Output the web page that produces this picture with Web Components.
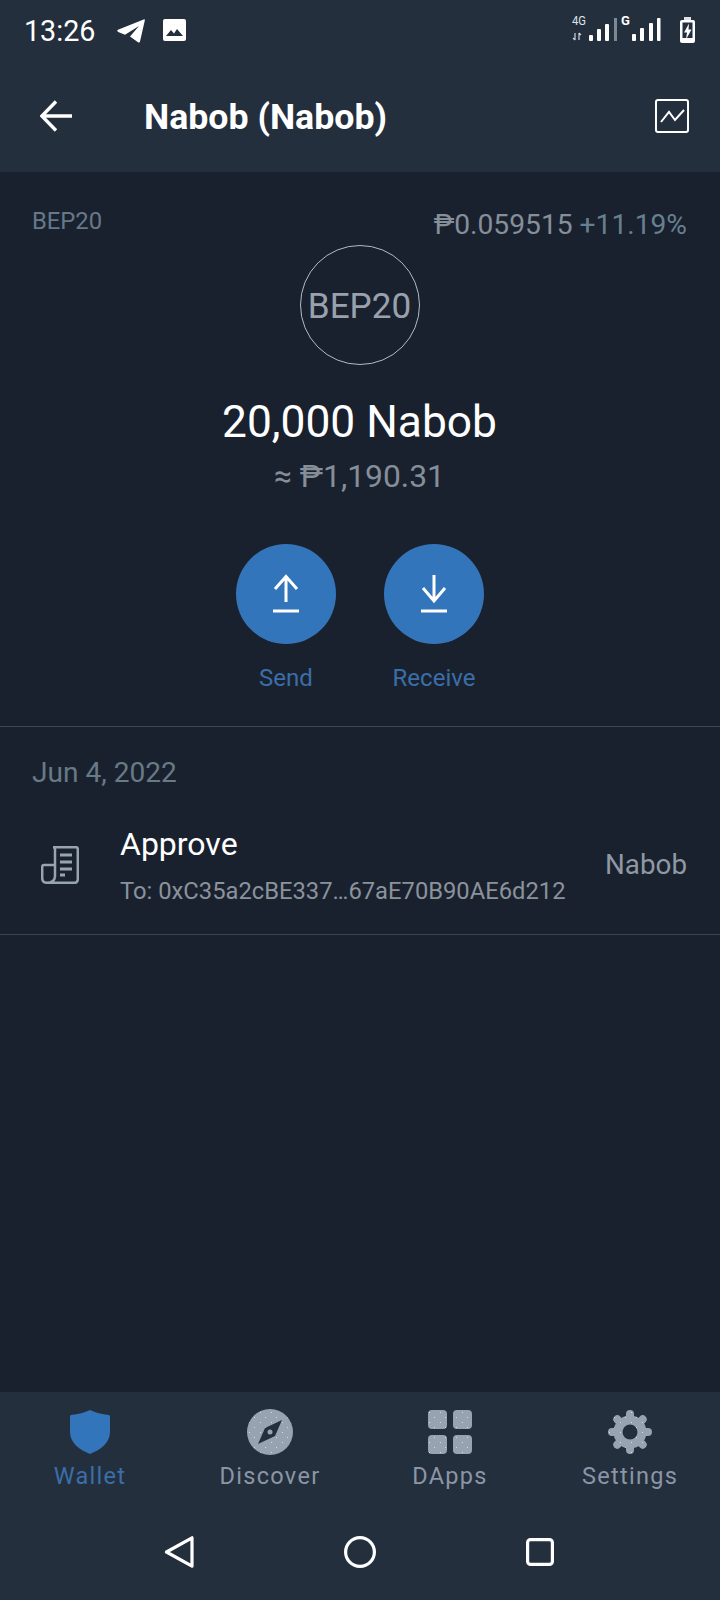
<!DOCTYPE html>
<html lang="en"><head><meta charset="utf-8"><title>Nabob</title>
<style>
html,body{margin:0;padding:0;background:#1a212e}
body{width:720px;height:1600px;display:flex;flex-direction:column;font-family:Roboto,"Liberation Sans",sans-serif;overflow:hidden}
token-page{flex:1}
</style></head><body>
<status-bar></status-bar>
<app-bar>Nabob (Nabob)</app-bar>
<token-page>
  <token-summary></token-summary>
  <tx-group date="Jun 4, 2022">
    <tx-row title="Approve" sub="To: 0xC35a2cBE337…67aE70B90AE6d212" value="Nabob"></tx-row>
  </tx-group>
</token-page>
<tab-bar></tab-bar>
<nav-bar></nav-bar>
<script>
const dots=`<defs><pattern id="d" width="11" height="10" patternUnits="userSpaceOnUse"><rect width="11" height="10" fill="#98a3b1"/><rect x="2" y="3" width="1" height="1" fill="#d5dae0"/><rect x="7" y="8" width="1" height="1" fill="#d5dae0"/></pattern></defs>`;
function el(name,html){customElements.define(name,class extends HTMLElement{
  connectedCallback(){ if(this.shadowRoot)return; this.attachShadow({mode:'open'}).innerHTML=typeof html==='function'?html(this):html; }
});}
el('status-bar',`<style>
:host{display:flex;align-items:center;height:62px;background:#242f3e;color:#fff;padding:0 20px 0 24px}
.t{font-size:28.700px;line-height:32px;width:70px;font-weight:400}
svg{display:block}
.r{margin-left:auto}
</style>
<div class="t">13:26</div>
<svg style="margin-left:23px" width="28" height="24" viewBox="0 0 28 24"><path fill="#fff" d="M1 10.8 26.6.4Q28-.1 27.8 1.4L23 22.6Q22.6 24 21 23.2L13 17.6 22 7 8 15.800 1.200 13Q-.6 11.800 1 10.800Z"/></svg>
<svg style="margin-left:18px;margin-top:-2px" width="23" height="22" viewBox="0 0 23 22"><rect width="23" height="22" rx="2" fill="#fff"/><path fill="#242f3e" d="M3 17 8 11l3 3.500 3-4.500 6 7Z"/></svg>
<svg class="r" width="130" height="62" viewBox="570 0 130 62" fill="#fff">
<text x="572" y="25" font-family="Roboto,sans-serif" font-size="13" textLength="14" lengthAdjust="spacingAndGlyphs" fill="#dfe3e7">4G</text>
<path d="M575 33v7M573 38l2 2M579 33v7M581 35l-2-2" stroke="#cfd4da" stroke-width="1.200" fill="none"/>
<rect x="589" y="35" width="4" height="6" rx="1"/><rect x="597" y="29" width="4" height="12" rx="1"/><rect x="605" y="24" width="4" height="17" rx="1"/>
<rect x="614" y="18" width="3" height="23" fill="#7d8894"/>
<text x="621" y="25" font-family="Roboto,sans-serif" font-size="13" font-weight="700">G</text>
<rect x="632" y="34" width="4" height="7" rx="1"/><rect x="640" y="28" width="4" height="13" rx="1"/><rect x="649" y="23" width="4" height="18" rx="1"/><rect x="657" y="18" width="3.500" height="23" rx="1"/>
<path d="M684 17h7v3h-7Z" fill="#dfe3e7"/><path d="M680 22q0-2 2-2h11q2 0 2 2v19q0 2-2 2h-11q-2 0-2-2Z"/><path d="M682.500 22.500h10V38h-10Z" fill="#242f3e"/><path d="M689 23.500l-5 9h3l-1 7 5.500-10h-3Z"/>
</svg>`);
el('app-bar',`<style>
:host{display:flex;align-items:center;height:108px;padding:0 31px 2px 40px;background:#242f3e;color:#fff}
svg{display:block;flex:none}
.t{font-size:35.700px;line-height:44px;font-weight:700;margin-left:72px;flex:1;padding-top:2px}
</style>
<svg width="32" height="32" viewBox="0 0 32 32" fill="none" stroke="#fff" stroke-width="3.400"><path d="M32 16H3M16 1.500 1.800 16 16 30.500"/></svg>
<div class="t"><slot></slot></div>
<svg width="34" height="34" viewBox="0 0 34 34" fill="none" stroke="#fff"><rect x="1" y="1" width="32" height="32" rx="2" stroke-width="2"/><path d="M6 23l8-10 6 8 9-10" stroke-width="2"/></svg>`);
el('action-button',h=>`<style>
:host{display:flex;flex-direction:column;align-items:center;width:100px}
.c{width:100px;height:100px;border-radius:50%;background:#3375bb}
svg{display:block}
.l{margin-top:18px;font-size:24px;line-height:32px;color:#3a6ea8;white-space:nowrap;padding-left:1px}
</style><div class="c"><svg width="100" height="100" viewBox="0 0 100 100" fill="none" stroke="#fff" stroke-width="3"><path d="${h.getAttribute('icon')}"/></svg></div><div class="l"><slot></slot></div>`);
el('token-summary',`<style>
:host{display:block;padding:32px 33px 32px 32px;border-bottom:1px solid #394853}
.top{display:flex;justify-content:space-between;align-items:flex-start;height:40px}
.net{font-size:23.800px;line-height:35px;color:#66788a}
.price{font-size:28.200px;line-height:42px;color:#858f99}
.price span{color:#67808f}
.col{display:flex;flex-direction:column;align-items:center}
.circle{box-sizing:border-box;margin-top:1px;width:120px;height:120px;border-radius:50%;border:1px solid #b4bac2;display:flex;align-items:center;justify-content:center;font-size:35.100px;line-height:42px;padding-top:2px;color:#98a1ac}
.amt{margin-top:32px;font-size:44.300px;line-height:50px;color:#fff}
.fiat{margin-top:9px;font-size:31.800px;line-height:40px;color:#858f99}
.act{margin-top:48px;display:flex;gap:48px}
</style>
<div class="top"><div class="net">BEP20</div><div class="price">₱0.059515 <span>+11.19%</span></div></div>
<div class="col">
<div class="circle">BEP20</div>
<div class="amt">20,000 Nabob</div>
<div class="fiat">≈ ₱1,190.31</div>
<div class="act">
<action-button icon="M50 32V58M39 45 50 32.500 61 45M37 67H63">Send</action-button>
<action-button icon="M50 31V57M39 44 50 57 61 44M37 67H63">Receive</action-button>
</div></div>`);
el('tx-group',h=>`<style>
:host{display:block}
.d{padding:26px 32px 0;font-size:28.100px;line-height:40px;color:#687987}
</style><div class="d">${h.getAttribute('date')}</div><slot></slot>`);
el('tx-row',h=>`<style>
:host{display:flex;align-items:center;margin-top:31px;padding:0 33px 28px 41px;border-bottom:1px solid #3a444f}
svg{display:block;flex:none}
.m{margin-left:41px;flex:1;min-width:0}
.a{font-size:32px;line-height:40px;color:#fff}
.s{margin-top:10px;font-size:23.750px;line-height:32px;color:#8a929c;white-space:nowrap;padding-top:1px;margin-bottom:-1px}
.v{font-size:27.800px;line-height:40px;color:#8f98a3}
</style>
<svg width="38" height="38" viewBox="0 0 38 38" fill="none" stroke="#98a3b1" stroke-width="2.500"><path d="M14 31V3Q14 1.200 12 1.200H35Q36.800 1.200 36.800 3V33Q36.800 36.800 33 36.800H6Q1.200 36.800 1.200 32V21Q1.200 19 3 19H13M6 36.800Q13 36.800 14 31"/><path d="M19 9H31M19 16H31M19 23H31M19 29H24" stroke-width="2.800"/></svg>
<div class="m"><div class="a">${h.getAttribute('title')}</div><div class="s">${h.getAttribute('sub')}</div></div>
<div class="v">${h.getAttribute('value')}</div>`);
el('tab-item',h=>`<style>
:host{display:flex;flex-direction:column;align-items:center;flex:1}
.l{margin-top:5px;font-size:23.500px;line-height:32px;letter-spacing:1.300px;color:${h.hasAttribute('active')?'#3a6ea8':'#8a96a5'}}
::slotted(svg){display:block}
</style><slot name="i"></slot><div class="l"><slot></slot></div>`);
el('tab-bar',`<style>
:host{display:flex;padding:17px 0 12px;background:#242f3e}
svg{display:block}
</style>
<tab-item active><svg slot="i" width="46" height="46" viewBox="0 0 46 46"><path fill="#3375bb" d="M23 1Q31 5 42 6Q43 6 43 8V23C43 34 33 41 23 45C13 41 3 34 3 23V8Q3 6 4 6Q15 5 23 1Z"/></svg>Wallet</tab-item>
<tab-item><svg slot="i" width="46" height="46" viewBox="0 0 46 46">${dots}<circle cx="23" cy="23" r="23" fill="url(#d)"/><path fill="#242f3e" d="M35 11 28 27 11 35 18 19Z"/><circle cx="23" cy="23" r="2.500" fill="#98a3b1"/></svg>Discover</tab-item>
<tab-item><svg slot="i" width="46" height="46" viewBox="0 0 46 46">${dots}<g fill="url(#d)"><rect x="1" y="1" width="19" height="19" rx="4"/><rect x="26" y="1" width="19" height="19" rx="4"/><rect x="1" y="26" width="19" height="19" rx="4"/><rect x="26" y="26" width="19" height="19" rx="4"/></g></svg>DApps</tab-item>
<tab-item><svg slot="i" width="46" height="46" viewBox="0 0 46 46">${dots}<circle cx="23" cy="23" r="16.500" fill="url(#d)"/><g stroke="url(#d)" stroke-width="8" stroke-linecap="round"><path d="M23 5V41M5 23H41M10.300 10.300 35.700 35.700M35.700 10.300 10.300 35.700"/></g><circle cx="23" cy="23" r="7.500" fill="#242f3e"/></svg>Settings</tab-item>`);
el('nav-bar',`<style>
:host{display:flex;justify-content:center;align-items:center;height:96px;background:#242f3e}
div{width:180px;display:flex;justify-content:center}
svg{display:block}
</style>
<div><svg width="32" height="32" viewBox="0 0 32 32" fill="none" stroke="#fff" stroke-width="3.200" stroke-linejoin="round"><path d="M2.500 16 28 1.800V30.200Z"/></svg></div>
<div><svg width="32" height="32" viewBox="0 0 32 32" fill="none" stroke="#fff" stroke-width="3.200"><circle cx="16" cy="16" r="14.400"/></svg></div>
<div><svg width="32" height="32" viewBox="0 0 32 32" fill="none" stroke="#fff" stroke-width="3.200"><rect x="3.600" y="3.600" width="24.800" height="24.800" rx="3"/></svg></div>`);
</script>
</body></html>
